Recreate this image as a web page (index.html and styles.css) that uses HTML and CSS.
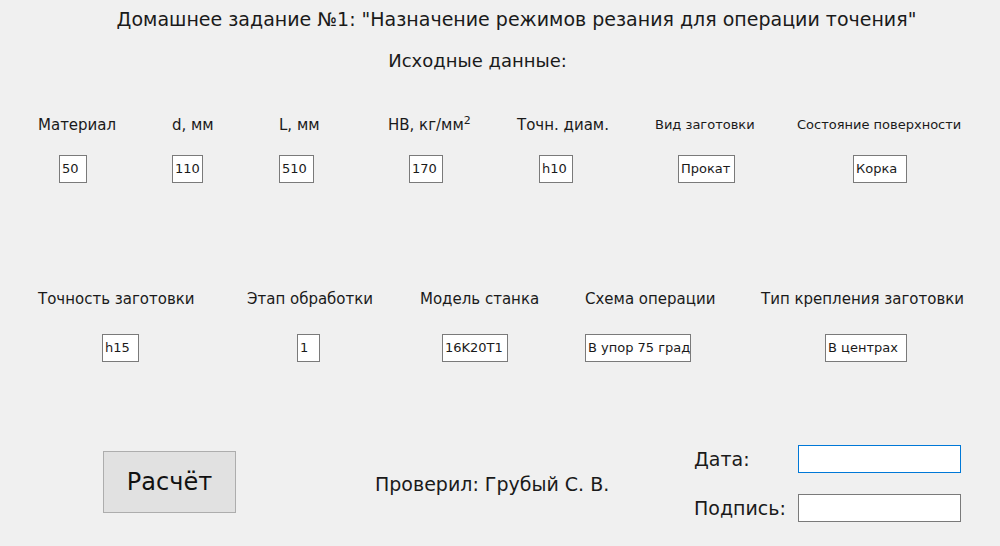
FILE: index.html
```html
<!DOCTYPE html>
<html lang="ru">
<head>
<meta charset="utf-8">
<title>Домашнее задание №1</title>
<link rel="stylesheet" href="styles.css">
</head>
<body>
<div class="form">
  <h1 class="title">Домашнее задание №1: "Назначение режимов резания для операции точения"</h1>
  <h2 class="subtitle">Исходные данные:</h2>

  <div class="row row1">
    <div class="field"><div class="label">Материал</div><div class="box off21 w28">50</div></div>
    <div class="field"><div class="label">d, мм</div><div class="box w31">110</div></div>
    <div class="field"><div class="label">L, мм</div><div class="box w35">510</div></div>
    <div class="field"><div class="label">НВ, кг/мм<sup>2</sup></div><div class="box off21 w34">170</div></div>
    <div class="field"><div class="label">Точн. диам.</div><div class="box off22 w34">h10</div></div>
    <div class="field"><div class="label small">Вид заготовки</div><div class="box off23 w57">Прокат</div></div>
    <div class="field"><div class="label small">Состояние поверхности</div><div class="box off56 w54">Корка</div></div>
  </div>

  <div class="row row2">
    <div class="field"><div class="label">Точность заготовки</div><div class="box off64 w37">h15</div></div>
    <div class="field"><div class="label">Этап обработки</div><div class="box off50 w23">1</div></div>
    <div class="field"><div class="label">Модель станка</div><div class="box off22 w66">16K20T1</div></div>
    <div class="field"><div class="label">Схема операции</div><div class="box w106">В упор 75 град</div></div>
    <div class="field"><div class="label">Тип крепления заготовки</div><div class="box off64 w82">В центрах</div></div>
  </div>

  <div class="bottom">
    <button class="calc" type="button">Расчёт</button>
    <div class="checked">Проверил: Грубый С. В.</div>
    <div class="sign">
      <div class="sign-label">Дата:</div><div class="sign-box focus"></div>
      <div class="sign-label">Подпись:</div><div class="sign-box"></div>
    </div>
  </div>
</div>
</body>
</html>
```

FILE: styles.css
```css
html, body {
  margin: 0;
  padding: 0;
  background: #f0f0f0;
}
.form {
  width: 1000px;
  height: 546px;
  box-sizing: border-box;
  font-family: "DejaVu Sans", "Liberation Sans", sans-serif;
  color: #1a1a1a;
  overflow: hidden;
}
.title {
  margin: 7px 0 0 0;
  font-size: 19px;
  line-height: 24px;
  font-weight: normal;
  text-align: center;
  padding-left: 33px;
  white-space: nowrap;
}
.subtitle {
  margin: 18px 0 0 0;
  font-size: 18px;
  line-height: 24px;
  font-weight: normal;
  text-align: center;
  padding-right: 45px;
}
.row {
  display: grid;
  padding-left: 38px;
}
.row1 {
  margin-top: 42px;
  grid-template-columns: 134px 107px 109px 129px 138px 142px 1fr;
}
.row2 {
  margin-top: 106px;
  grid-template-columns: 209px 173px 165px 176px 1fr;
}
.field {
  display: flex;
  flex-direction: column;
  align-items: flex-start;
}
.label {
  font-size: 15px;
  line-height: 20px;
  white-space: nowrap;
}
.label.small {
  font-size: 13px;
}
.label sup {
  font-size: 11px;
  line-height: 0;
  vertical-align: 6px;
}
.row1 .box { margin-top: 20px; }
.row2 .box { margin-top: 25px; }
.box {
  box-sizing: border-box;
  height: 28px;
  background: #ffffff;
  border: 1px solid #7a7a7a;
  font-size: 13px;
  line-height: 26px;
  padding-left: 2px;
  white-space: nowrap;
  overflow: hidden;
}
.off21 { margin-left: 21px; }
.off22 { margin-left: 22px; }
.off23 { margin-left: 23px; }
.off50 { margin-left: 50px; }
.off56 { margin-left: 56px; }
.off64 { margin-left: 64px; }
.w23 { width: 23px; }
.w28 { width: 28px; }
.w31 { width: 31px; }
.w34 { width: 34px; }
.w35 { width: 35px; }
.w37 { width: 37px; }
.w54 { width: 54px; }
.w57 { width: 57px; }
.w66 { width: 66px; }
.w82 { width: 82px; }
.w106 { width: 106px; }

.bottom {
  margin-top: 83px;
  padding-left: 103px;
  display: flex;
  align-items: flex-start;
}
.calc {
  margin-top: 6px;
  width: 133px;
  height: 62px;
  background: #e1e1e1;
  border: 1px solid #adadad;
  font-family: inherit;
  font-size: 24px;
  color: #111;
  padding: 0;
}
.checked {
  margin-left: 139px;
  margin-top: 27px;
  font-size: 19px;
  line-height: 24px;
  width: 319px;
  white-space: nowrap;
}
.sign {
  display: grid;
  grid-template-columns: 104px 163px;
  grid-auto-rows: 28px;
  row-gap: 21px;
  align-items: center;
}
.sign-label {
  font-size: 19px;
  line-height: 24px;
  white-space: nowrap;
}
.sign-box {
  box-sizing: border-box;
  height: 28px;
  background: #fff;
  border: 1px solid #7a7a7a;
}
.sign-box.focus {
  border-color: #0078d7;
}
```
